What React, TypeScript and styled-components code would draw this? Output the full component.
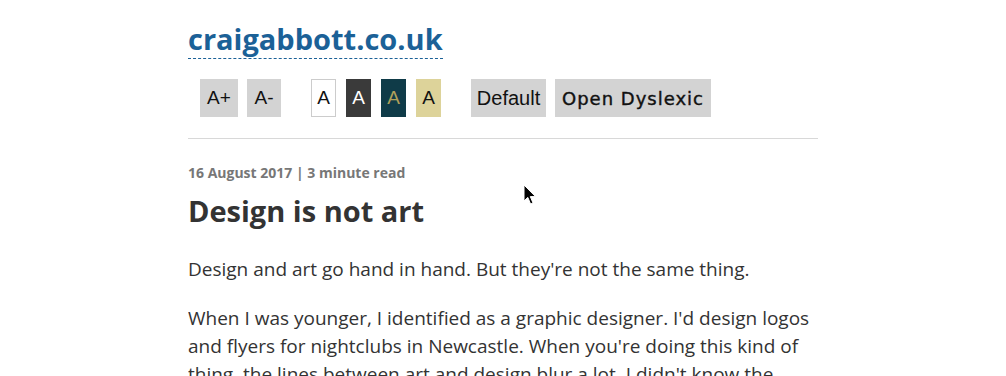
import styled, { createGlobalStyle } from "styled-components";

const GlobalStyle = createGlobalStyle`
  html, body {
    margin: 0;
    padding: 0;
    background: #ffffff;
  }
  body {
    font-family: "Open Sans", "Liberation Sans", sans-serif;
    color: #333333;
    overflow: hidden;
  }
`;

const themes = [
  { bg: "#ffffff", fg: "#111111", border: "#cccccc" },
  { bg: "#3a3a3a", fg: "#ffffff", border: "#3a3a3a" },
  { bg: "#0f3b48", fg: "#b0a15a", border: "#0f3b48" },
  { bg: "#ddd39a", fg: "#111111", border: "#ddd39a" },
];

const App = () => {
  return (
    <>
      <GlobalStyle />
      <Page>
        <Header>
          <Logo href="#">craigabbott.co.uk</Logo>
          <Toolbar>
            <Group>
              <SizeButton $w={38}>A+</SizeButton>
              <SizeButton $w={34}>A-</SizeButton>
            </Group>
            <Group $gap={10}>
              {themes.map((t, i) => (
                <ThemeButton key={i} $bg={t.bg} $fg={t.fg} $border={t.border}>
                  A
                </ThemeButton>
              ))}
            </Group>
            <Group>
              <FontButton $w={75}>Default</FontButton>
              <FontButton $w={156} $dyslexic>
                Open Dyslexic
              </FontButton>
            </Group>
          </Toolbar>
        </Header>
        <Article>
          <Meta>16 August 2017 | 3 minute read</Meta>
          <Title>Design is not art</Title>
          <Paragraph>
            Design and art go hand in hand. But they're not the same thing.
          </Paragraph>
          <Paragraph>
            When I was younger, I identified as a graphic designer. I'd design
            logos and flyers for nightclubs in Newcastle. When you're doing this
            kind of thing, the lines between art and design blur a lot. I didn't
            know the difference back then.
          </Paragraph>
        </Article>
        <Cursor width="14" height="22" viewBox="0 0 14 22">
          <path
            d="M1 1 L1 17 L4.8 13.4 L7.6 20 L10 19 L7.3 12.6 L12.5 12.6 Z"
            fill="#000"
            stroke="#fff"
            strokeWidth="1"
          />
        </Cursor>
      </Page>
    </>
  );
};

export default App;

const Page = styled.div`
  position: relative;
  width: 630px;
  height: 376px;
  margin: 0 auto;
  overflow: hidden;
`;

const Header = styled.header`
  padding-top: 20px;
  padding-bottom: 21px;
  border-bottom: 1px solid #d8d8d8;
`;

const Logo = styled.a`
  display: inline-block;
  font-family: "Open Sans", sans-serif;
  font-weight: 700;
  font-size: 29px;
  line-height: 38px;
  color: #1b6197;
  text-decoration: none;
  border-bottom: 1px dashed #1b6197;
`;

const Toolbar = styled.div`
  display: flex;
  align-items: center;
  gap: 30px;
  margin-top: 20px;
  padding-left: 12px;
`;

const Group = styled.div<{ $gap?: number }>`
  display: flex;
  gap: ${({ $gap }) => $gap ?? 9}px;
`;

const BaseButton = styled.button`
  height: 38px;
  margin: 0;
  border: none;
  background: #d3d3d3;
  color: #111111;
  font-family: "Liberation Sans", Arial, sans-serif;
  font-size: 19px;
  padding: 0;
  text-align: center;
  cursor: pointer;
`;

const SizeButton = styled(BaseButton)<{ $w: number }>`
  width: ${({ $w }) => $w}px;
`;

const ThemeButton = styled(BaseButton)<{ $bg: string; $fg: string; $border: string }>`
  width: 25px;
  background: ${({ $bg }) => $bg};
  color: ${({ $fg }) => $fg};
  border: 1px solid ${({ $border }) => $border};
`;

const FontButton = styled(BaseButton)<{ $w: number; $dyslexic?: boolean }>`
  width: ${({ $w }) => $w}px;
  font-size: ${({ $dyslexic }) => ($dyslexic ? "18px" : "20px")};
  font-family: ${({ $dyslexic }) =>
    $dyslexic ? '"DejaVu Sans", sans-serif' : '"Liberation Sans", Arial, sans-serif'};
  letter-spacing: ${({ $dyslexic }) => ($dyslexic ? "1px" : "0")};
  -webkit-text-stroke: ${({ $dyslexic }) => ($dyslexic ? "0.4px #111" : "0")};
`;

const Article = styled.article`
  padding-top: 24px;
`;

const Meta = styled.p`
  margin: 0;
  font-size: 14px;
  font-weight: 700;
  line-height: 20px;
  color: #777777;
`;

const Title = styled.h1`
  margin: 8px 0 24px;
  font-size: 29px;
  font-weight: 700;
  line-height: 40px;
  color: #333333;
`;

const Paragraph = styled.p`
  margin: 0 0 21px;
  font-size: 19px;
  line-height: 28px;
  color: #333333;
`;

const Cursor = styled.svg`
  position: absolute;
  left: 335px;
  top: 184px;
`;
